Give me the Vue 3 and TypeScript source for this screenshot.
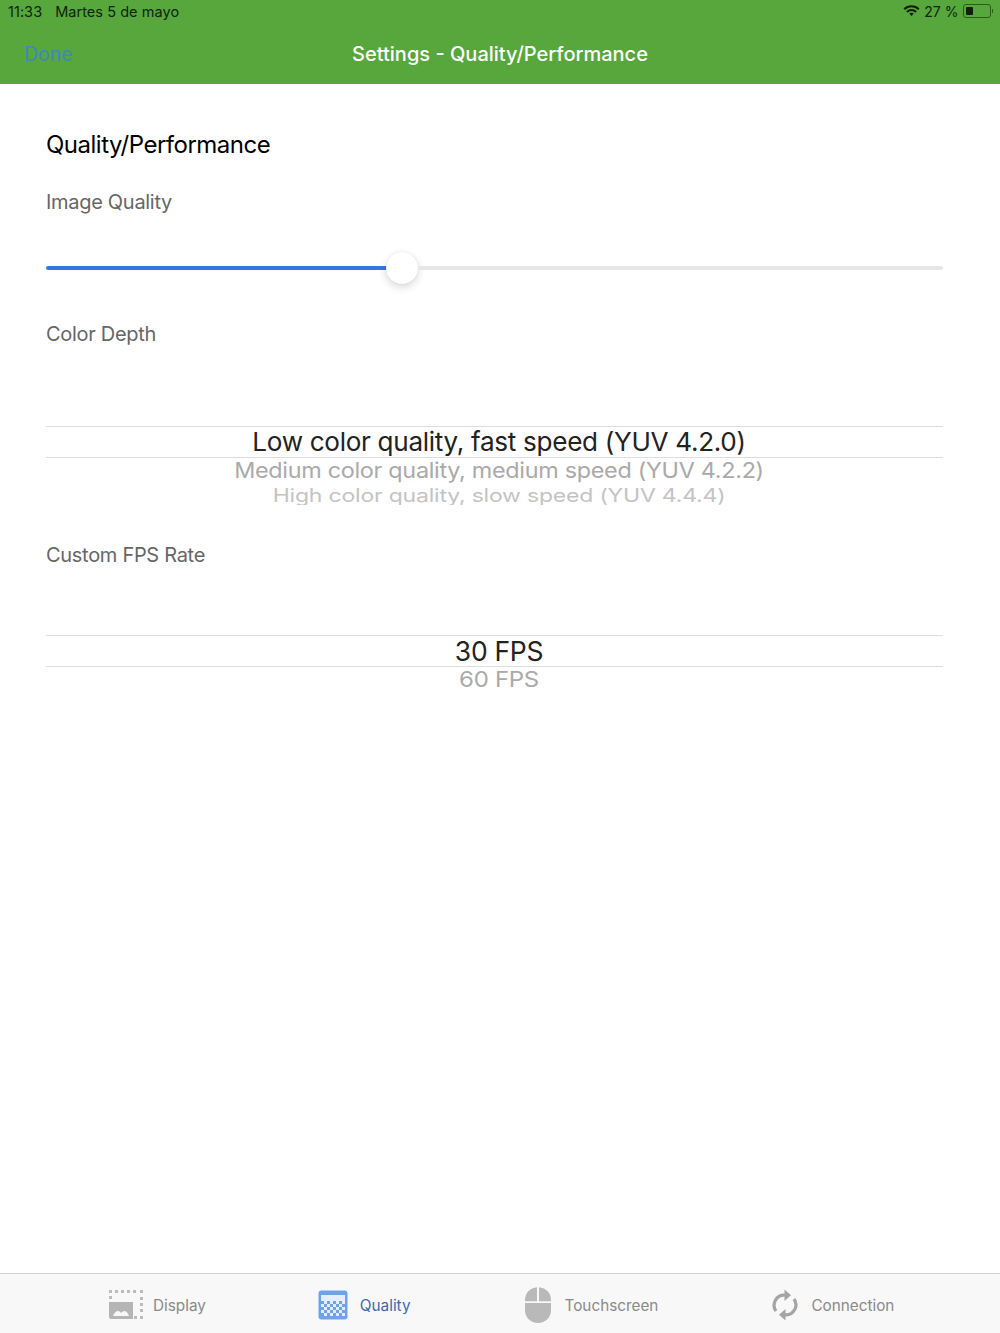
<script setup lang="ts">
const tabs = [
  { id: "display", label: "Display", active: false },
  { id: "quality", label: "Quality", active: true },
  { id: "touch", label: "Touchscreen", active: false },
  { id: "conn", label: "Connection", active: false },
];
const imageQuality = 38.1;

// dither squares of the quality icon, 3px cells alternating by row
const dither: { x: number; y: number }[] = [];
for (let r = 0; r < 5; r++) {
  for (let c = 0; c < 8; c++) {
    if ((r + c) % 2 === 0) dither.push({ x: 3 + c * 3, y: 11 + r * 3 });
  }
}
</script>

<template>
  <div class="page">
    <header class="top">
      <div class="status">
        <div class="status-left">
          <span>11:33</span>
          <span>Martes 5 de mayo</span>
        </div>
        <div class="status-right">
          <svg width="17" height="12" viewBox="0 0 17 12" fill="none" stroke="#0d2008" stroke-width="2.100">
            <path d="M1.200 4.200a10.500 10.500 0 0 1 14.600 0" />
            <path d="M3.900 6.900a6.600 6.600 0 0 1 9.200 0" />
            <path d="M6.300 8.600c-.1 0 2.200 2.700 2.200 2.700s2.300-2.700 2.200-2.700c-1.200-1-3.200-1-4.400 0z" fill="#0d2008" stroke="none" />
          </svg>
          <span class="pct">27 %</span>
          <div class="battery"><div class="battery-level"></div></div>
          <div class="battery-tip"></div>
        </div>
      </div>
      <nav class="nav">
        <span class="done">Done</span>
        <span class="title">Settings - Quality/Performance</span>
      </nav>
    </header>

    <main class="content">
      <h1>Quality/Performance</h1>

      <div class="label">Image Quality</div>
      <div class="slider">
        <div class="slider-fill" :style="{ width: imageQuality + '%' }"></div>
        <div class="slider-thumb"></div>
        <div class="slider-rest"></div>
      </div>

      <div class="label depth-label">Color Depth</div>
      <div class="picker depth">
        <div class="row selected">Low color quality, fast speed (YUV 4.2.0)</div>
        <div class="row next">Medium color quality, medium speed (YUV 4.2.2)</div>
        <div class="row last">High color quality, slow speed (YUV 4.4.4)</div>
      </div>

      <div class="label fps-label">Custom FPS Rate</div>
      <div class="picker fps">
        <div class="row selected">30 FPS</div>
        <div class="row next">60 FPS</div>
      </div>
    </main>

    <footer class="tabbar">
      <div v-for="t in tabs" :key="t.id" class="tab" :class="[t.id, { active: t.active }]">
        <svg v-if="t.id === 'display'" width="36" height="30" viewBox="0 0 36 30">
          <g fill="#bcbcbc">
            <rect x="1" y="0" width="3" height="3" /><rect x="7" y="0" width="3" height="3" />
            <rect x="13" y="0" width="3" height="3" /><rect x="19" y="0" width="3" height="3" />
            <rect x="25" y="0" width="3" height="3" /><rect x="32" y="0" width="3" height="3" />
            <rect x="1" y="6" width="3" height="3" /><rect x="32" y="7" width="3" height="3" />
            <rect x="32" y="13" width="3" height="3" /><rect x="32" y="19" width="3" height="3" />
            <rect x="26" y="26" width="3" height="3" /><rect x="32" y="26" width="3" height="3" />
          </g>
          <path d="M1 12h24v17H3a2 2 0 0 1-2-2z" fill="#b5b5b5" />
          <path d="M5 26c1-3 3-5 5-5s2 1 3 2c1-1 2-2 3.500-2 2 0 4 3 4.500 5z" fill="#f7f7f7" />
        </svg>
        <svg v-else-if="t.id === 'quality'" width="30" height="30" viewBox="0 0 30 30">
          <rect x="0.500" y="0.500" width="29" height="29" rx="3" fill="#6ea3ec" />
          <rect x="3" y="5" width="24" height="21" fill="#e3edfb" />
          <g fill="#6ea3ec">
            <rect v-for="(d, i) in dither" :key="i" :x="d.x" :y="d.y" width="3" height="3" />
          </g>
        </svg>
        <svg v-else-if="t.id === 'touch'" width="28" height="36" viewBox="0 0 28 36">
          <path d="M13 .2v14H1V13C1 6 6 .8 13 .2z" fill="#b9b9b9" />
          <path d="M15 .2c7 .6 12 5.800 12 12.800v1.200H15z" fill="#b9b9b9" />
          <path d="M1 16h26v7c0 7.500-5.500 13-13 13S1 30.500 1 23z" fill="#b9b9b9" />
        </svg>
        <svg v-else width="26" height="32" viewBox="0 0 26 32">
          <path d="M4 22A10 10 0 0 1 13 6.200" fill="none" stroke="#a4a4a4" stroke-width="3.200" />
          <path d="M12.500 .5l6.500 5.700-6.500 5.700z" fill="#a4a4a4" />
          <path d="M22 10A10 10 0 0 1 13 25.800" fill="none" stroke="#a4a4a4" stroke-width="3.200" />
          <path d="M13.500 20.100l-6.500 5.700 6.500 5.700z" fill="#a4a4a4" />
        </svg>
        <span>{{ t.label }}</span>
      </div>
    </footer>
  </div>
</template>

<style>
html, body {
  margin: 0;
  background: #fff;
}
</style>

<style scoped>
.page {
  width: 1000px;
  height: 1333px;
  display: flex;
  flex-direction: column;
  font-family: Inter, "Liberation Sans", sans-serif;
  overflow: hidden;
}
.top {
  background: #57a73d;
  height: 84px;
  flex: none;
}
.status {
  height: 24px;
  box-sizing: border-box;
  padding: 0 8px 2px;
  display: flex;
  justify-content: space-between;
  align-items: center;
  font-size: 14.500px;
  letter-spacing: 0.05px;
  color: #10240a;
}
.status-left {
  display: flex;
  gap: 13px;
}
.status-right {
  display: flex;
  align-items: center;
  gap: 4px;
  margin-right: -1px;
}
.pct {
  font-size: 14px;
}
.battery {
  width: 28px;
  height: 14px;
  box-sizing: border-box;
  border: 1px solid #2c5c1c;
  border-radius: 3px;
  padding: 2px;
}
.battery-level {
  width: 7px;
  height: 100%;
  background: #0d2008;
  border-radius: 1px;
}
.battery-tip {
  width: 1.500px;
  height: 4px;
  background: #2c5c1c;
  margin-left: -3px;
}
.nav {
  height: 60px;
  position: relative;
  display: flex;
  align-items: center;
  justify-content: center;
}
.done {
  position: absolute;
  left: 24px;
  top: 18px;
  font-size: 19.500px;
  color: #3f87c0;
}
.title {
  color: #fff;
  font-size: 20px;
  font-weight: 500;
}
.content {
  flex: 1;
  padding: 46px 57px 0 46px;
}
h1 {
  margin: 0;
  font-size: 24px;
  line-height: 30px;
  font-weight: 400;
  color: #000;
  letter-spacing: -0.5px;
}
.label {
  margin-top: 27px;
  font-size: 20px;
  line-height: 30px;
  color: #666;
  letter-spacing: -0.3px;
}
.slider {
  margin-top: 34px;
  height: 34px;
  display: flex;
  align-items: center;
}
.slider-fill {
  height: 4px;
  background: #3478e0;
  border-radius: 2px 0 0 2px;
}
.slider-thumb {
  width: 32px;
  height: 32px;
  flex: none;
  margin-left: -2px;
  background: #fff;
  border-radius: 50%;
  box-shadow: 0 3px 8px rgba(0, 0, 0, 0.16), 0 0 1px rgba(0, 0, 0, 0.12);
}
.slider-rest {
  flex: 1;
  height: 4px;
  background: #e6e6e6;
  border-radius: 0 2px 2px 0;
}
.depth-label {
  margin-top: 34px;
}
.picker {
  text-align: center;
  overflow: hidden;
  color: #222;
}
.depth {
  margin-top: 77px;
  height: 79px;
}
.fps-label {
  margin-top: 35px;
}
.fps {
  margin-top: 65px;
  height: 57px;
}
.row {
  white-space: nowrap;
  line-height: 30px;
  padding-left: 9px;
}
.selected {
  height: 30px;
  font-size: 26.100px;
  letter-spacing: -0.3px;
  border-top: 1px solid #dedede;
  border-bottom: 1px solid #dedede;
}
.next {
  height: 26px;
  line-height: 26px;
  margin-top: 0;
  font-size: 23.400px;
  letter-spacing: -0.3px;
  color: #aaa;
  transform: scaleY(0.92);
}
.last {
  height: 22px;
  line-height: 22px;
  margin-top: 1px;
  font-size: 23px;
  letter-spacing: -0.2px;
  color: #c4c4c4;
  transform: scaleY(0.8);
}
.fps .selected {
  font-size: 26.500px;
}
.fps .next {
  font-size: 24px;
}
.tabbar {
  flex: none;
  height: 60px;
  box-sizing: border-box;
  padding: 2px 0 0 108px;
  border-top: 1px solid #d2d2d2;
  background: #f8f8f8;
  display: flex;
  align-items: center;
  font-size: 15.300px;
  color: #8a8a8a;
}
.tab {
  display: flex;
  align-items: center;
  gap: 9px;
}
.tab span {
  margin-top: 1px;
}
.tab.quality {
  margin-left: 112px;
  gap: 12px;
}
.tab.quality span {
  color: #3a6ab5;
}
.tab.touch {
  margin-left: 113px;
  gap: 13px;
}
.tab.conn {
  margin-left: 114px;
  gap: 13px;
}
</style>
